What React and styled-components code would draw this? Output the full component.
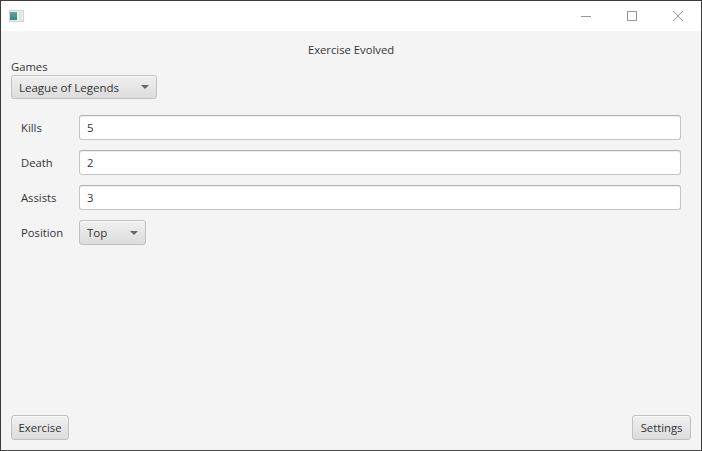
import styled, { createGlobalStyle } from "styled-components";

const GlobalStyle = createGlobalStyle`
html, body {
  margin: 0;
  padding: 0;
  background: #f4f4f4;
}
* {
  box-sizing: border-box;
}
`

const App = () => {
  return (
    <>
      <GlobalStyle />
      <Window>
        <TitleBar>
          <AppIcon viewBox="0 0 15 12">
            <defs>
              <linearGradient id="iconPane" x1="0" y1="0" x2="0" y2="1">
                <stop offset="0" stopColor="#6f9f9c" />
                <stop offset="1" stopColor="#2f8a7c" />
              </linearGradient>
            </defs>
            <rect x="0.5" y="0.5" width="14" height="11" fill="#eef1f1" stroke="#cdd2d2" />
            <rect x="1" y="2" width="7" height="8" fill="url(#iconPane)" />
            <rect x="10" y="2" width="3" height="8" fill="#dfe4e4" />
          </AppIcon>
          <WindowButtons>
            <WindowButton>
              <svg width="12" height="12" viewBox="0 0 12 12">
                <path d="M1 6.5H11" stroke="#999" />
              </svg>
            </WindowButton>
            <WindowButton>
              <svg width="12" height="12" viewBox="0 0 12 12">
                <rect x="1.5" y="1.5" width="9" height="9" fill="none" stroke="#999" />
              </svg>
            </WindowButton>
            <WindowButton>
              <svg width="12" height="12" viewBox="0 0 12 12">
                <path d="M1 1L11 11M11 1L1 11" stroke="#999" />
              </svg>
            </WindowButton>
          </WindowButtons>
        </TitleBar>
        <Content>
          <Heading>Exercise Evolved</Heading>
          <GamesLabel>Games</GamesLabel>
          <Combo $width={146} $height={24}>
            League of Legends
            <Arrow />
          </Combo>
          <Form>
            <Row>
              <RowLabel>Kills</RowLabel>
              <Field>5</Field>
            </Row>
            <Row>
              <RowLabel>Death</RowLabel>
              <Field>2</Field>
            </Row>
            <Row>
              <RowLabel>Assists</RowLabel>
              <Field>3</Field>
            </Row>
            <Row>
              <RowLabel>Position</RowLabel>
              <Combo $width={67} $height={25}>
                Top
                <Arrow />
              </Combo>
            </Row>
          </Form>
          <Footer>
            <Button $width={58}>Exercise</Button>
            <Button $width={59}>Settings</Button>
          </Footer>
        </Content>
      </Window>
    </>
  )
}

export default App;

const Window = styled.div`
width: 702px;
height: 451px;
display: flex;
flex-direction: column;
border: 1px solid #3c3c3c;
border-bottom-color: #4a4a4a;
overflow: hidden;
background: #f4f4f4;
font-family: "Open Sans", "Noto Sans", sans-serif;
font-size: 11.25px;
color: #333;
`

const TitleBar = styled.div`
height: 30px;
flex-shrink: 0;
background: #fff;
display: flex;
align-items: center;
justify-content: space-between;
padding-left: 8px;
`

const AppIcon = styled.svg`
width: 15px;
height: 12px;
margin-bottom: 1px;
`

const WindowButtons = styled.div`
display: flex;
`

const WindowButton = styled.div`
width: 46px;
height: 30px;
display: flex;
align-items: center;
justify-content: center;
`

const Content = styled.div`
flex: 1;
display: flex;
flex-direction: column;
padding: 10px 10px 10px;
`

const Heading = styled.div`
text-align: center;
line-height: 18px;
`

const GamesLabel = styled.div`
line-height: 16px;
`

const Combo = styled.div`
width: ${(p) => p.$width}px;
height: ${(p) => p.$height}px;
flex-shrink: 0;
display: flex;
align-items: center;
justify-content: space-between;
padding: 0 7px;
border: 1px solid #c0c0c0;
border-radius: 3px;
background: linear-gradient(#f0f0f0, #dcdcdc);
box-shadow: inset 0 1px 0 #fafafa;
font-size: 11.5px;
`

const Arrow = styled.span`
width: 0;
height: 0;
border-left: 4px solid transparent;
border-right: 4px solid transparent;
border-top: 4px solid #666;
`

const Form = styled.div`
display: flex;
flex-direction: column;
gap: 10px;
margin-top: 16px;
padding: 0 10px;
`

const Row = styled.div`
display: flex;
align-items: center;
height: 25px;
`

const RowLabel = styled.div`
width: 58px;
flex-shrink: 0;
`

const Field = styled.div`
width: 602px;
height: 25px;
display: flex;
align-items: center;
padding: 0 7px;
background: #fff;
border: 1px solid #c4c4c4;
border-top-color: #b0b0b0;
border-radius: 3px;
box-shadow: inset 0 1px 1px #eee;
`

const Footer = styled.div`
margin-top: auto;
display: flex;
justify-content: space-between;
`

const Button = styled.div`
width: ${(p) => p.$width}px;
height: 25px;
display: flex;
align-items: center;
justify-content: center;
border: 1px solid #c0c0c0;
border-radius: 3px;
background: linear-gradient(#f0f0f0, #dcdcdc);
box-shadow: inset 0 1px 0 #fafafa;
`
